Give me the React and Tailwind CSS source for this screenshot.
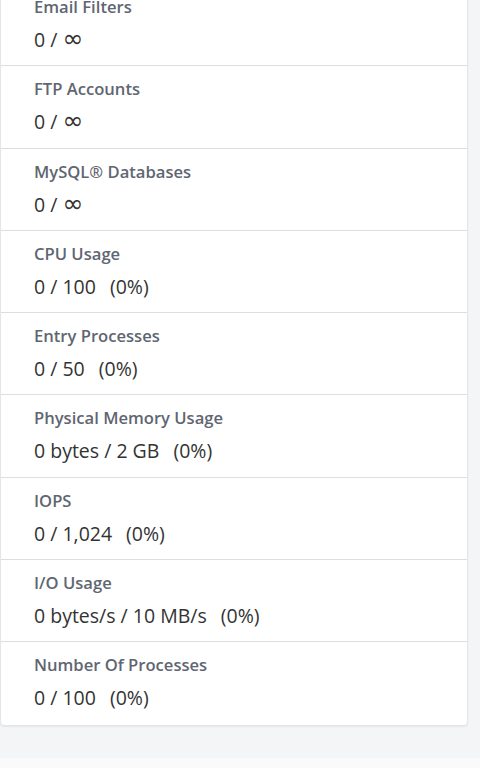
const rows = [
  { label: 'Email Filters', value: '0 / ', inf: true },
  { label: 'FTP Accounts', value: '0 / ', inf: true },
  { label: 'MySQL® Databases', value: '0 / ', inf: true },
  { label: 'CPU Usage', value: '0 / 100', pct: '(0%)' },
  { label: 'Entry Processes', value: '0 / 50', pct: '(0%)' },
  { label: 'Physical Memory Usage', value: '0 bytes / 2 GB', pct: '(0%)' },
  { label: 'IOPS', value: '0 / 1,024', pct: '(0%)' },
  { label: 'I/O Usage', value: '0 bytes/s / 10 MB/s', pct: '(0%)' },
  { label: 'Number Of Processes', value: '0 / 100', pct: '(0%)' },
];

export default function App() {
  return (
    <div
      className="h-[768px] overflow-hidden bg-[#fafafa]"
      style={{ fontFamily: '"Open Sans", "Noto Sans", sans-serif' }}
    >
      <div className="h-[758px] bg-[#f4f5f7] overflow-hidden">
        <div className="mt-[-17px] w-[468px] bg-white border border-[#e3e5e8] rounded-[4px] shadow-[0_1px_2px_rgba(0,0,0,0.06)]">
          {rows.map((r, i) => (
            <div
              key={r.label}
              className={`h-[82.3px] pl-[33px] pt-[12px] ${i < rows.length - 1 ? 'border-b border-[#dcdee2]' : ''}`}
            >
              <div className="text-[16.6px] leading-[22px] font-semibold text-[#5f6672]">{r.label}</div>
              <div className="mt-[8px] h-[28px] whitespace-pre text-[19.5px] leading-[28px] text-[#333]">
                {r.value}
                {r.inf && (
                  <span className="text-[25px] leading-[20px]" style={{ fontFamily: '"DejaVu Sans", sans-serif' }}>
                    ∞
                  </span>
                )}
                {r.pct && <span className="ml-[14px]">{r.pct}</span>}
              </div>
            </div>
          ))}
        </div>
      </div>
    </div>
  );
}
